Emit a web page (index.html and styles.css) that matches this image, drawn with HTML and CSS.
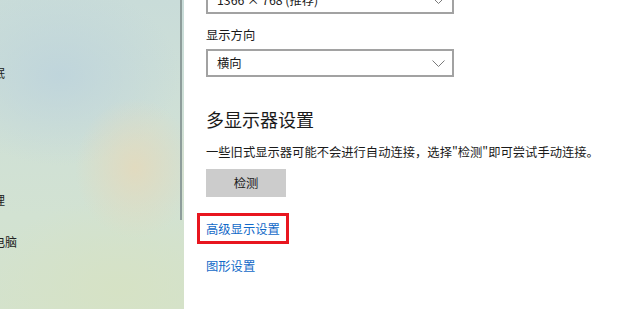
FILE: index.html
```html
<!DOCTYPE html>
<html lang="zh-CN">
<head>
<meta charset="utf-8">
<title>显示设置</title>
<link rel="stylesheet" href="styles.css">
</head>
<body>
<div class="window">
  <aside class="sidebar">
    <ul class="nav">
      <li class="nav-item">电源和睡眠</li>
      <li class="nav-item">存储</li>
      <li class="nav-item">平板电脑</li>
      <li class="nav-item">多任务处理</li>
      <li class="nav-item">投影到此电脑</li>
      <li class="nav-item">体验共享</li>
    </ul>
    <div class="scrollbar"></div>
  </aside>
  <main class="content">
    <div class="select select-first">
      <span>1366 × 768 (推荐)</span>
      <svg class="chevron" width="13" height="7" viewBox="0 0 13 7"><path d="M0.5 0.5 L6.5 6.5 L12.5 0.5" fill="none" stroke="#7a7a7a" stroke-width="1"/></svg>
    </div>
    <div class="label">显示方向</div>
    <div class="select">
      <span>横向</span>
      <svg class="chevron" width="13" height="7" viewBox="0 0 13 7"><path d="M0.5 0.5 L6.5 6.5 L12.5 0.5" fill="none" stroke="#7a7a7a" stroke-width="1"/></svg>
    </div>
    <h2 class="heading">多显示器设置</h2>
    <p class="desc">一些旧式显示器可能不会进行自动连接，选择"检测"即可尝试手动连接。</p>
    <button class="btn">检测</button>
    <div class="links">
      <a class="link link-marked">高级显示设置</a>
      <a class="link">图形设置</a>
    </div>
  </main>
</div>
</body>
</html>
```

FILE: styles.css
```css
* { box-sizing: border-box; }
html, body {
  margin: 0;
  padding: 0;
  width: 620px;
  height: 309px;
  overflow: hidden;
  background: #ffffff;
  font-family: "Noto Sans CJK SC", "Noto Sans", sans-serif;
  color: #1a1a1a;
}
.window {
  display: flex;
  width: 620px;
  height: 309px;
}
.sidebar {
  position: relative;
  flex: 0 0 184px;
  height: 309px;
  overflow: hidden;
  background:
    radial-gradient(ellipse 60px 70px at 135px 168px, rgba(226, 218, 190, 0.95), rgba(226, 218, 190, 0) 100%),
    radial-gradient(ellipse 120px 90px at 60px 75px, rgba(190, 212, 220, 0.9), rgba(190, 212, 220, 0) 100%),
    radial-gradient(ellipse 140px 90px at 120px 290px, rgba(214, 226, 196, 0.9), rgba(214, 226, 196, 0) 100%),
    linear-gradient(180deg, #c9dcd9 0%, #cfe0d6 40%, #d2e2d2 70%, #d4e2cc 100%);
}
.nav {
  list-style: none;
  margin: 0;
  padding: 52px 0 0 0;
  margin-left: -55px;
}
.nav-item {
  height: 42.25px;
  line-height: 42px;
  font-size: 12px;
  white-space: nowrap;
  color: #222;
}
.scrollbar {
  position: absolute;
  top: 0;
  right: 2px;
  width: 2px;
  height: 220px;
  background: #8e9d9b;
}
.content {
  flex: 1;
  padding-left: 22px;
  margin-top: -14px;
}
.select {
  width: 248px;
  height: 28px;
  border: 2px solid #a2a2a2;
  display: flex;
  align-items: center;
  justify-content: space-between;
  padding: 0 7px 0 9px;
  font-size: 12.3px;
  color: #1a1a1a;
}
.chevron { display: block; }
.label {
  margin-top: 11px;
  height: 20px;
  line-height: 20px;
  font-size: 12.3px;
  margin-bottom: 4px;
}
.heading {
  margin: 29px 0 0 0;
  font-size: 18px;
  font-weight: normal;
  line-height: 26px;
  height: 26px;
}
.desc {
  margin: 11px 0 0 0;
  font-size: 12.3px;
  line-height: 18px;
  white-space: nowrap;
}
.btn {
  display: block;
  margin-top: 8px;
  width: 80px;
  height: 28px;
  border: none;
  background: #cccccc;
  font-family: inherit;
  font-size: 12.3px;
  color: #1a1a1a;
  padding: 0;
}
.links {
  display: flex;
  flex-direction: column;
  align-items: flex-start;
  margin-top: 16px;
}
.link {
  font-size: 12.3px;
  line-height: 18px;
  color: #1169c8;
  text-decoration: none;
}
.link-marked {
  border: 3px solid #e8161f;
  padding: 4px 6px 3px 6px;
  margin-left: -9px;
  margin-bottom: 13px;
}
```
